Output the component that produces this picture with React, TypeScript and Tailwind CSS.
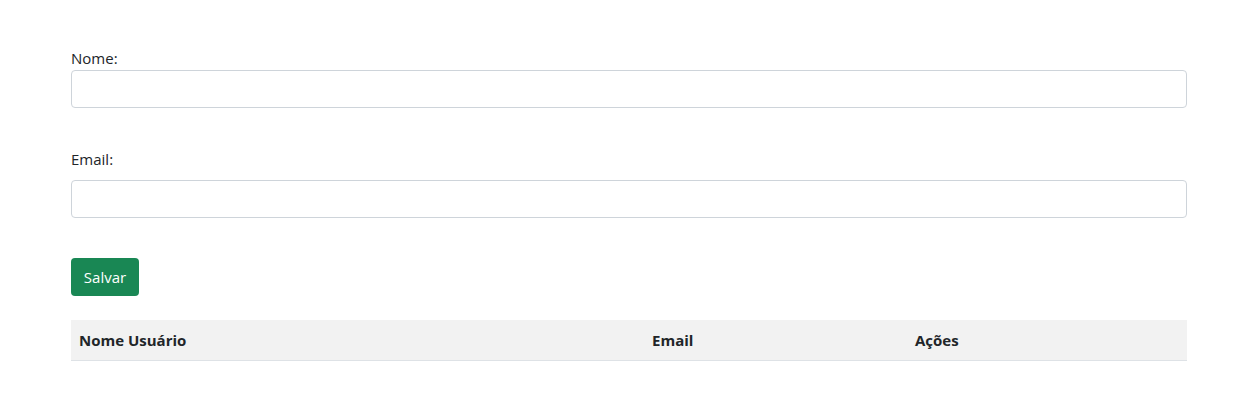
import React, { useState } from 'react';

const App: React.FC = () => {
  const [nome, setNome] = useState('');
  const [email, setEmail] = useState('');

  return (
    <div className="min-h-screen bg-white text-[#212529] text-[15px] leading-6 font-['Segoe_UI','Open_Sans','Noto_Sans',sans-serif]">
      <div className="ml-[71px] w-[1116px] pt-[46px]">
        <form onSubmit={e => e.preventDefault()}>
          <div>
            <label htmlFor="nome" className="block">Nome:</label>
            <input
              id="nome"
              value={nome}
              onChange={e => setNome(e.target.value)}
              className="block w-full h-[38px] px-3 border border-[#ced4da] rounded-[4px] outline-none"
            />
          </div>

          <div className="mt-[39px]">
            <label htmlFor="email" className="block mb-[9px]">Email:</label>
            <input
              id="email"
              type="email"
              value={email}
              onChange={e => setEmail(e.target.value)}
              className="block w-full h-[38px] px-3 border border-[#ced4da] rounded-[4px] outline-none"
            />
          </div>

          <button
            type="submit"
            className="mt-[40px] h-[38px] w-[68px] bg-[#198754] text-white rounded-[4px]"
          >
            Salvar
          </button>
        </form>

        <table className="mt-[24px] w-full border-collapse table-fixed">
          <thead>
            <tr className="bg-[#f2f2f2] border-b border-[#dee2e6] h-[40px]">
              <th className="w-[573px] px-2 pt-px text-left font-bold">Nome Usuário</th>
              <th className="w-[263px] px-2 pt-px text-left font-bold">Email</th>
              <th className="px-2 pt-px text-left font-bold">Ações</th>
            </tr>
          </thead>
          <tbody></tbody>
        </table>
      </div>
    </div>
  );
};

export default App;
